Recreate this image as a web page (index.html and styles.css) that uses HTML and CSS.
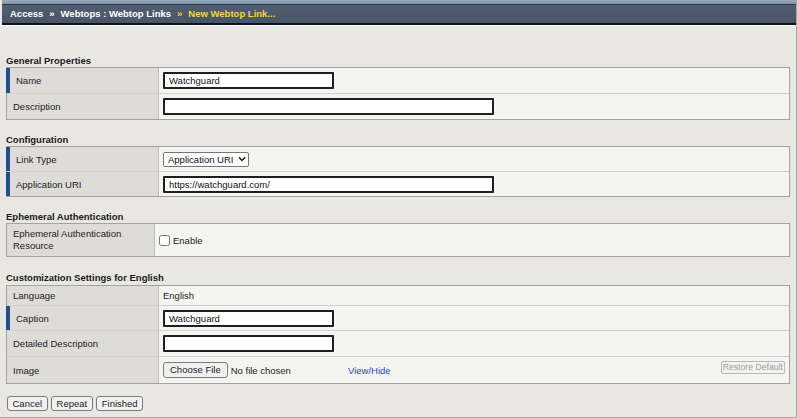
FILE: index.html
```html
<!DOCTYPE html>
<html lang="en">
<head>
<meta charset="utf-8">
<title>New Webtop Link</title>
<link rel="stylesheet" href="styles.css">
</head>
<body>
<div class="page">
  <div class="topbar">
    <span class="crumb">Access</span><span class="sep">»</span><span class="crumb">Webtops : Webtop Links</span><span class="sep cur">»</span><span class="crumb cur">New Webtop Link...</span>
  </div>

  <div class="content">
    <section class="sec first">
      <h2 class="sec-title">General Properties</h2>
      <div class="box">
        <div class="row h25">
          <div class="lbl req">Name</div>
          <div class="val"><input class="txt short" type="text" value="Watchguard"></div>
        </div>
        <div class="row h25">
          <div class="lbl">Description</div>
          <div class="val"><input class="txt long" type="text" value=""></div>
        </div>
      </div>
    </section>

    <section class="sec">
      <h2 class="sec-title">Configuration</h2>
      <div class="box">
        <div class="row h24">
          <div class="lbl req">Link Type</div>
          <div class="val">
            <span class="selwrap">
              <select class="sel"><option>Application URI</option></select>
              <svg class="chev" width="8" height="6" viewBox="0 0 8 6"><path d="M1 1.2 L4 4.4 L7 1.2" fill="none" stroke="#1a1a1a" stroke-width="1.5"/></svg>
            </span>
          </div>
        </div>
        <div class="row h24">
          <div class="lbl req">Application URI</div>
          <div class="val"><input class="txt long" type="text" value="https://watchguard.com/"></div>
        </div>
      </div>
    </section>

    <section class="sec">
      <h2 class="sec-title">Ephemeral Authentication</h2>
      <div class="box">
        <div class="row h31">
          <div class="lbl narrow two">Ephemeral Authentication Resource</div>
          <div class="val"><label class="check"><input type="checkbox" class="cb">Enable</label></div>
        </div>
      </div>
    </section>

    <section class="sec custom">
      <h2 class="sec-title">Customization Settings for English</h2>
      <div class="box">
        <div class="row h19">
          <div class="lbl">Language</div>
          <div class="val"><span class="plain">English</span></div>
        </div>
        <div class="row h24">
          <div class="lbl req">Caption</div>
          <div class="val"><input class="txt short" type="text" value="Watchguard"></div>
        </div>
        <div class="row h25">
          <div class="lbl">Detailed Description</div>
          <div class="val"><input class="txt short" type="text" value=""></div>
        </div>
        <div class="row h26">
          <div class="lbl">Image</div>
          <div class="val">
            <span class="file"><button class="btn choose" type="button">Choose File</button><span class="nofile">No file chosen</span></span>
            <a class="link" href="#">View/Hide</a>
            <button class="btn restore" type="button" disabled>Restore Default</button>
          </div>
        </div>
      </div>
    </section>

    <div class="actions">
      <button class="btn act" type="button">Cancel</button>
      <button class="btn act" type="button">Repeat</button>
      <button class="btn act" type="button">Finished</button>
    </div>
  </div>
</div>
</body>
</html>
```

FILE: styles.css
```css
html, body {
  margin: 0;
  padding: 0;
}

body {
  background: #e9e7e2;
  font-family: "Liberation Sans", Arial, sans-serif;
  font-size: 9.5px;
  color: #1c1c1c;
}

.page {
  height: 418px;
  box-sizing: border-box;
  border-right: 1px solid #a8a8a6;
  border-bottom: 1px solid #a8a8a6;
  overflow: hidden;
}

/* ---------- top bar ---------- */
.topbar {
  margin: 0 0 0 2px;
  height: 18px;
  padding: 5px 0 0 8px;
  line-height: 18px;
  background: linear-gradient(to bottom,
    #98a8bc 0, #8495ab 4px,
    #2c3854 4px, #2c3854 5px,
    #515e70 5px, #485568 100%);
  border-bottom: 2px solid #121212;
  box-shadow: 0 1px 0 #ffffff;
  font-weight: bold;
  color: #ffffff;
  white-space: nowrap;
}

.crumb.cur,
.sep.cur {
  color: #f7d531;
}

.sep {
  margin: 0 6px;
  font-size: 9.5px;
}

/* ---------- content ---------- */
.content {
  padding: 0 6px 0 6px;
}

.sec {
  margin-top: 11px;
}

.sec.first {
  margin-top: 27px;
}

.sec.custom {
  margin-top: 12px;
}

.sec-title {
  margin: 0;
  padding-top: 2px;
  font-size: 9.5px;
  font-weight: bold;
  line-height: 13px;
  color: #1a1a1a;
}

.sec.custom .sec-title {
  padding-bottom: 1px;
}

.box {
  border: 1px solid #a3a3a1;
  background: #f4f4f0;
}

.row {
  display: flex;
  align-items: stretch;
}

.row + .row {
  border-top: 1px solid #d0d0cc;
}

.h19 { height: 19px; }
.h24 { height: 24px; }
.h25 { height: 25px; }
.h26 { height: 26px; }
.h31 { height: 32px; }

.lbl {
  box-sizing: border-box;
  width: 152px;
  flex: none;
  display: flex;
  align-items: center;
  padding-left: 6px;
  background: #dedcd7;
  border-right: 1px solid #bdbdb9;
  color: #222222;
}

.lbl.req {
  width: 153px;
  margin-left: -1px;
  border-left: 4px solid #1f4f8f;
}

.lbl.narrow {
  width: 148px;
}

.lbl.two {
  line-height: 12px;
  padding-right: 8px;
}

.val {
  flex: 1;
  display: flex;
  align-items: center;
  padding: 0 4px;
  min-width: 0;
}

/* ---------- controls ---------- */
.txt {
  box-sizing: border-box;
  height: 17px;
  border: 2px solid #1f1f1f;
  border-radius: 1px;
  padding: 0 4px;
  margin: 0;
  background: #ffffff;
  font-family: "Liberation Sans", Arial, sans-serif;
  font-size: 9.5px;
  color: #111111;
  outline: none;
}

.txt.short { width: 171px; }
.txt.long { width: 331px; }

.selwrap {
  position: relative;
  display: inline-block;
  height: 15px;
}

.sel {
  -webkit-appearance: none;
  appearance: none;
  box-sizing: border-box;
  width: 86px;
  height: 15px;
  margin: 0;
  padding: 0 0 0 4px;
  border: 1px solid #767676;
  border-radius: 2px;
  background: #ffffff;
  font-family: "Liberation Sans", Arial, sans-serif;
  font-size: 9.5px;
  line-height: 13px;
  color: #111111;
  display: block;
}

.chev {
  position: absolute;
  right: 3px;
  top: 4.5px;
  pointer-events: none;
}

.check {
  display: inline-flex;
  align-items: center;
  color: #1c1c1c;
}

.cb {
  width: 11px;
  height: 11px;
  margin: 0 3px 0 0;
}

.plain {
  color: #1c1c1c;
}

.btn {
  box-sizing: border-box;
  margin: 0;
  border: 1px solid #7b7b7b;
  border-radius: 3px;
  background: #f0f0f0;
  font-family: "Liberation Sans", Arial, sans-serif;
  font-size: 9.5px;
  color: #1c1c1c;
  line-height: 1;
  cursor: default;
}

.file {
  display: inline-flex;
  align-items: center;
  width: 185px;
  flex: none;
}

.choose {
  height: 16px;
  padding: 0 6px;
}

.nofile {
  margin-left: 3px;
}

.link {
  color: #2b44cf;
  text-decoration: none;
}

.restore {
  margin-left: auto;
  align-self: flex-start;
  margin-top: 4px;
  height: 13px;
  padding: 0 1px;
  font-size: 8.7px;
  color: #a3a3a3;
  border-color: #b9b9b9;
  border-radius: 2px;
  background: #f2f2f0;
}

.actions {
  display: flex;
  gap: 3.5px;
  margin: 12px 0 0 1px;
}

.act {
  height: 15px;
  padding: 0 4.5px;
}
```
